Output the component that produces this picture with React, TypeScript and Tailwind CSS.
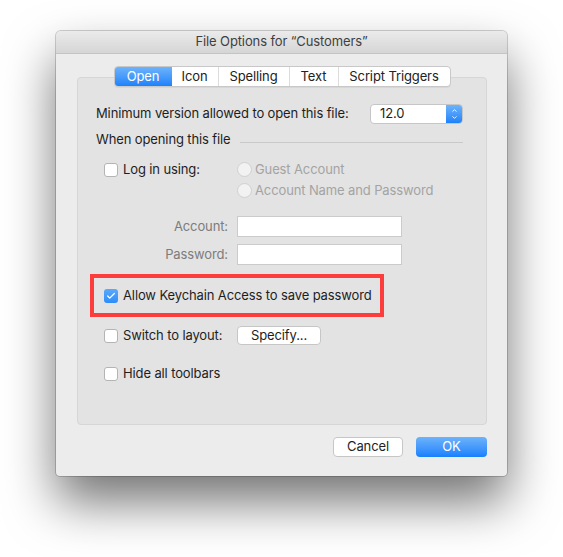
import { Check, ChevronUp, ChevronDown } from 'lucide-react';

const font = { fontFamily: 'Inter, "Liberation Sans", sans-serif' };

function Checkbox({ checked = false }: { checked?: boolean }) {
  if (checked) {
    return (
      <span className="w-[14px] h-[14px] rounded-[3px] bg-gradient-to-b from-[#5aa9fb] to-[#2d8cf9] flex items-center justify-center shrink-0">
        <Check className="w-[10px] h-[10px] text-white" strokeWidth={3} />
      </span>
    );
  }
  return <span className="w-[14px] h-[14px] rounded-[3px] bg-white border border-[#b4b4b4] shrink-0" />;
}

function Radio() {
  return <span className="w-[15px] h-[15px] rounded-full bg-[#f2f2f2] border border-[#d0d0d0] shrink-0" />;
}

function Tab({ label, active = false, last = false, w }: { label: string; active?: boolean; last?: boolean; w: string }) {
  return (
    <div
      className={`${w} h-full flex items-center justify-center ${
        active
          ? 'bg-gradient-to-b from-[#6cb3fa] to-[#1b82fb] text-white'
          : 'text-[#222]'
      } ${last || active ? '' : 'border-r border-[#dcdcdc]'}`}
    >
      {label}
    </div>
  );
}

export default function App() {
  return (
    <div className="w-[563px] h-[557px] bg-white overflow-hidden text-[13px] tracking-[-0.12px]" style={font}>
      <div className="ml-[56px] mt-[31px] w-[451px] h-[445px] rounded-t-[5px] rounded-b-[4px] bg-[#ececec] flex flex-col shadow-[0_26px_50px_rgba(0,0,0,0.55),0_0_0_1px_rgba(0,0,0,0.18)]">
        {/* title bar */}
        <div className="h-[23px] rounded-t-[5px] bg-gradient-to-b from-[#ebebeb] to-[#d5d5d5] border-b border-[#c4c4c4] flex items-center justify-center text-[#3f3f3f]">
          File Options for “Customers”
        </div>

        <div className="pt-[12px] pl-[21px] pr-[20px] flex flex-col">
          {/* tabs */}
          <div className="relative z-10 mb-[-10px] self-center h-[21px] flex rounded-[4px] overflow-hidden bg-white border border-[#c8c8c8] shadow-[0_1px_0_rgba(0,0,0,0.05)]">
            <Tab label="Open" active w="w-[57px]" />
            <Tab label="Icon" w="w-[47px]" />
            <Tab label="Spelling" w="w-[71px]" />
            <Tab label="Text" w="w-[49px]" />
            <Tab label="Script Triggers" last w="w-[111px]" />
          </div>

          {/* group box */}
          <div className="h-[348px] rounded-[4px] bg-[#e3e3e3] border border-[#d6d6d6] pt-[26px] pl-[18px] pr-[23px] flex flex-col text-[#1e1e1e]">
            <div className="h-[20px] flex items-center justify-between">
              <span>Minimum version allowed to open this file:</span>
              <div className="w-[93px] h-[20px] flex rounded-[4px] bg-white border border-[#c6c6c6] overflow-hidden">
                <span className="flex-1 pl-[9px] flex items-center">12.0</span>
                <span className="w-[16px] bg-gradient-to-b from-[#6cb3fa] to-[#1b82fb] flex flex-col items-center justify-center">
                  <ChevronUp className="w-[9px] h-[7px] text-white" strokeWidth={3} />
                  <ChevronDown className="w-[9px] h-[7px] text-white" strokeWidth={3} />
                </span>
              </div>
            </div>

            <div className="mt-[5px] h-[20px] flex items-start">
              <span className="mt-[1px]">When opening this file</span>
              <span className="flex-1 ml-[9px] mt-[13px] h-px bg-[#c9c9c9]" />
            </div>

            <div className="mt-[13px] flex">
              <div className="w-[141px] pl-[8px] h-[15px] flex items-center gap-[5px]">
                <Checkbox />
                <span>Log in using:</span>
              </div>
              <div className="flex flex-col gap-[6px] text-[#a3a3a3]">
                <div className="h-[15px] flex items-center gap-[3px]">
                  <Radio />
                  <span>Guest Account</span>
                </div>
                <div className="h-[15px] flex items-center gap-[3px]">
                  <Radio />
                  <span>Account Name and Password</span>
                </div>
              </div>
            </div>

            <div className="mt-[18px] flex flex-col gap-[7px]">
              {['Account:', 'Password:'].map((l) => (
                <div key={l} className="h-[21px] flex items-center">
                  <span className="w-[132px] text-right text-[#7c7c7c]">{l}</span>
                  <span className="ml-[9px] w-[165px] h-[21px] bg-white border border-[#cbcbcb]" />
                </div>
              ))}
            </div>

            <div className="mt-[9px] -ml-[6px] w-[294px] h-[43px] border-[4px] border-[#fc3d3b] flex items-center pl-[10px] gap-[5px]">
              <Checkbox checked />
              <span>Allow Keychain Access to save password</span>
            </div>

            <div className="mt-[9px] h-[19px] flex items-center">
              <div className="w-[141px] pl-[8px] flex items-center gap-[5px]">
                <Checkbox />
                <span>Switch to layout:</span>
              </div>
              <div className="w-[84px] h-[19px] rounded-[4px] bg-white border border-[#c6c6c6] flex items-center justify-center">
                Specify...
              </div>
            </div>

            <div className="mt-[19px] h-[19px] pl-[8px] flex items-center gap-[5px]">
              <Checkbox />
              <span>Hide all toolbars</span>
            </div>
          </div>

          {/* footer */}
          <div className="mt-[12px] flex justify-end gap-[13px]">
            <div className="w-[70px] h-[20px] rounded-[4px] bg-white border border-[#c6c6c6] flex items-center justify-center text-[#1e1e1e]">
              Cancel
            </div>
            <div className="w-[71px] h-[20px] rounded-[4px] bg-gradient-to-b from-[#6cb3fa] to-[#1580fc] flex items-center justify-center text-white">
              OK
            </div>
          </div>
        </div>
      </div>
    </div>
  );
}
